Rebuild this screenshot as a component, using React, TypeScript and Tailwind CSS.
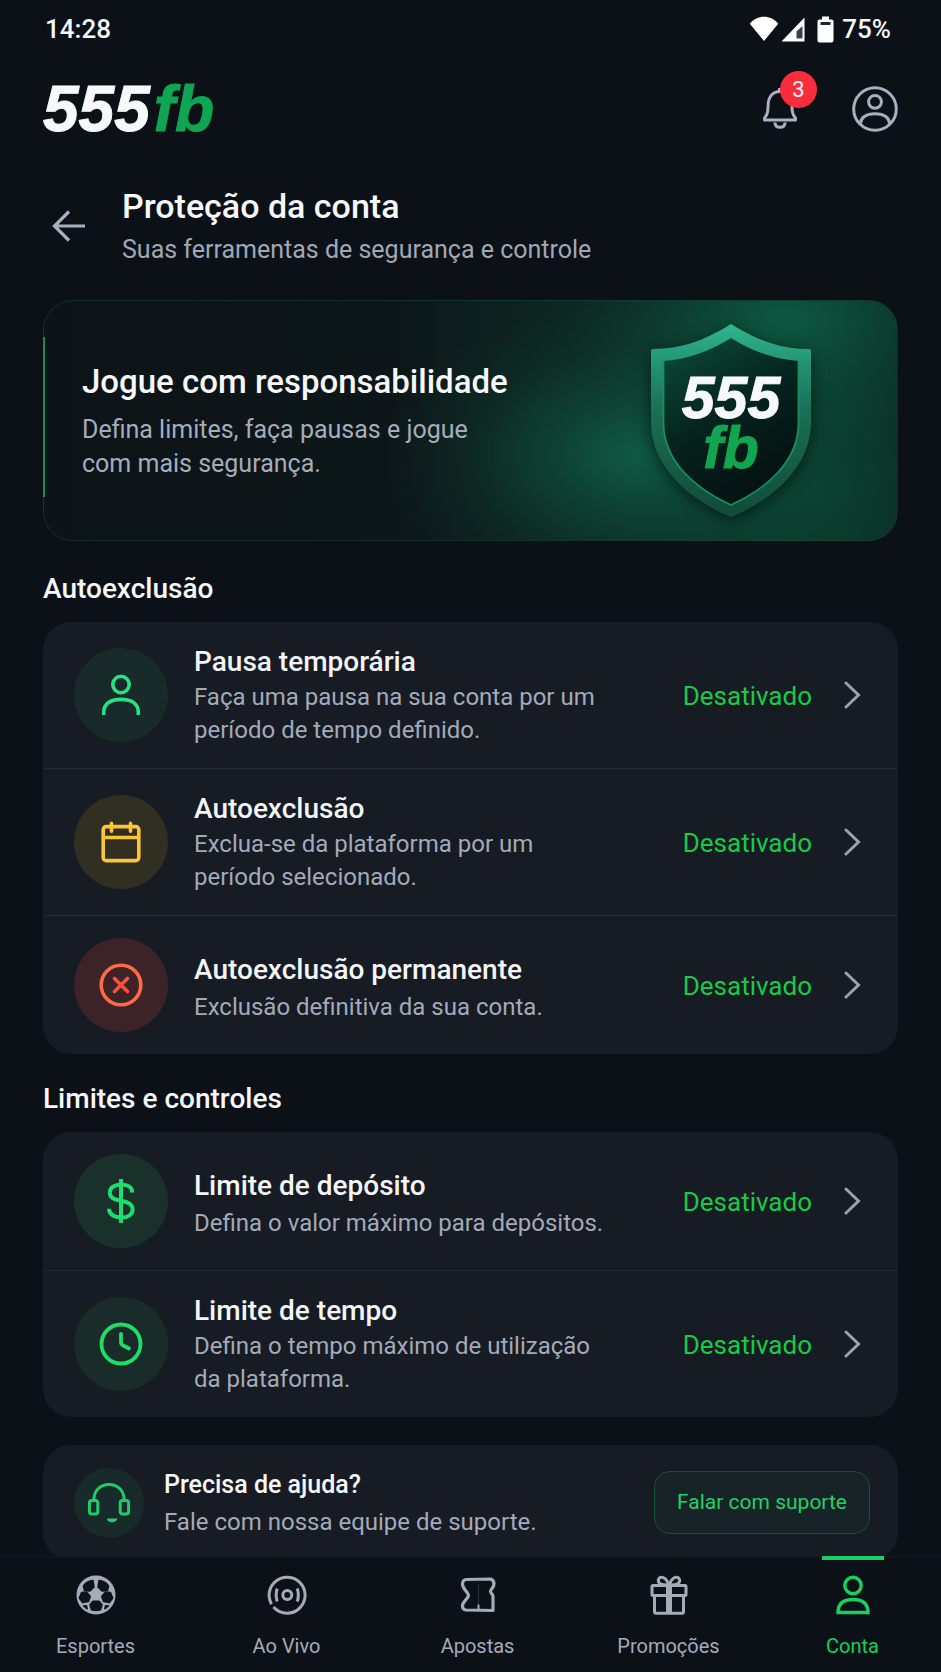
import type { ReactNode } from 'react'
import { clsx } from 'clsx'

interface Setting {
  title: string
  description: string
  status: string
  tint: string
  icon: ReactNode
}

interface NavEntry {
  label: string
  icon: ReactNode
  active?: boolean
}

/* Icons */

function PersonIcon() {
  return (
    <svg width="40" height="42" viewBox="0 0 40 42" fill="none" stroke="#29e084" strokeWidth="3.6">
      <circle cx="20" cy="10.5" r="8.2" />
      <path d="M2.7 41v-2.5C2.7 30 9 25.4 20 25.4S37.3 30 37.3 38.5V41" />
    </svg>
  )
}

function CalendarIcon() {
  return (
    <svg width="40" height="42" viewBox="0 0 40 42" fill="none" stroke="#fcc437" strokeWidth="3.6" strokeLinecap="round" strokeLinejoin="round">
      <rect x="2.2" y="5.6" width="35.6" height="34" rx="3" />
      <path d="M2.5 16.5h35M10.5 2.2v8M29.5 2.2v8" />
    </svg>
  )
}

function BlockIcon() {
  return (
    <svg width="44" height="44" viewBox="0 0 44 44" fill="none" strokeWidth="3.6" strokeLinecap="round">
      <circle cx="22" cy="22" r="19.8" stroke="#ff6a45" />
      <path d="M15.5 15.5l13 13M28.5 15.5l-13 13" stroke="#fb5240" />
    </svg>
  )
}

function DollarIcon() {
  return (
    <svg width="30" height="46" viewBox="0 0 30 46" fill="none" stroke="#1edd70" strokeWidth="4">
      <path d="M15 1v44" />
      <path d="M26.3 14.5C26.3 9.6 22 6.4 15.3 6.4S3.8 9.8 3.8 14.8c0 5.2 4.7 6.7 11.2 8 6.6 1.3 11.6 2.9 11.6 8.5 0 5-4.5 8.3-11.4 8.3S3 36.2 3 30.7" />
    </svg>
  )
}

function ClockIcon() {
  return (
    <svg width="44" height="44" viewBox="0 0 44 44" fill="none" stroke="#20dc68" strokeWidth="3.8" strokeLinecap="round" strokeLinejoin="round">
      <circle cx="22" cy="22" r="19.5" />
      <path d="M22 12v8.5c0 1.5.6 2.2 1.7 2.8l6.3 3.2" />
    </svg>
  )
}

function HeadsetIcon() {
  return (
    <svg width="44" height="42" viewBox="0 0 44 42" fill="none" stroke="#1fcc6c" strokeWidth="3" strokeLinejoin="round">
      <path d="M6.8 18.5C6.8 8.5 13 2.4 22 2.4s15.2 6.1 15.2 16.1" />
      <rect x="2.4" y="18.5" width="8.4" height="13.5" rx="2.5" />
      <rect x="33.2" y="18.5" width="8.4" height="13.5" rx="2.5" />
      <path d="M20 36.5h10.5c-.8 2.7-2.6 3.7-5 3.7-3.3 0-5.2-.7-5.5-3.7z" fill="#1fcc6c" stroke="none" />
    </svg>
  )
}

function BackIcon() {
  return (
    <svg width="34" height="32" viewBox="0 0 34 32" fill="none" stroke="#a9b1bf" strokeWidth="3.2">
      <path d="M33 16H3M17 1.5L2.5 16 17 30.5" />
    </svg>
  )
}

function ChevronIcon() {
  return (
    <svg width="17" height="28" viewBox="0 0 17 28" fill="none" stroke="#9aa2b1" strokeWidth="3" strokeLinecap="round">
      <path d="M2 2l12.5 12L2 26" />
    </svg>
  )
}

function BellIcon() {
  return (
    <svg width="36" height="44" viewBox="0 0 36 44" fill="none" stroke="#aab1be" strokeWidth="3" strokeLinejoin="round">
      <path d="M18 4V1" strokeWidth="4" />
      <path d="M2.5 33v-2c2.5-2.5 3.5-5.5 3.5-11C6 10 10.5 4.5 18 4.5S30 10 30 20c0 5.5 1 8.500 3.500 11v2z" />
      <path d="M13 35.5c0 3 2 4.8 5 4.8s5-1.8 5-4.8" />
    </svg>
  )
}

function AvatarIcon() {
  return (
    <svg width="46" height="46" viewBox="0 0 46 46" fill="none" stroke="#a8afbc" strokeWidth="3">
      <circle cx="23" cy="23" r="21.3" />
      <circle cx="23" cy="15.8" r="6.4" />
      <path d="M8 38.3C9 31 14 27.8 23 27.8S37 31 38 38.3" />
    </svg>
  )
}

function WifiIcon() {
  return (
    <svg width="30" height="26" viewBox="0 0 30 26" fill="#fff">
      <path d="M15 25L.8 7.8C4.5 3 9.5.8 15 .8S25.5 3 29.2 7.8z" />
    </svg>
  )
}

function SignalIcon() {
  return (
    <svg width="24" height="25" viewBox="0 0 24 25">
      <path d="M23.5.5V24.5H.5z" fill="#fff" />
      <path d="M15.5 14.5l6-5.5v12.5h-6z" fill="#3a404b" />
    </svg>
  )
}

function BatteryIcon() {
  return (
    <svg width="17" height="27" viewBox="0 0 17 27">
      <path d="M5 .5h7v3h2.5a2 2 0 0 1 2 2V24.5a2 2 0 0 1-2 2h-12a2 2 0 0 1-2-2V5.5a2 2 0 0 1 2-2H5z" fill="#fff" />
      <path d="M3.5 6h10v3h-10z" fill="#20252e" />
    </svg>
  )
}

function BallIcon() {
  return (
    <svg width="40" height="40" viewBox="0 0 40 40">
      <circle cx="20" cy="20" r="19.5" fill="#a5abb8" />
      <g fill="#0f141c" stroke="#0f141c" strokeWidth="1.5" strokeLinejoin="round">
        <path d="M17 5.500l1 6.500-4 4-5.500-.5L7.500 11Q10.500 6 17 5.500z" />
        <path d="M23 5.500l-1 6.500 4 4 5.500-.5L32.500 11Q29.500 6 23 5.500z" />
        <path d="M5.500 17.500l5-.5 3.800 4.500-1.800 5-6 1L3.300 23z" />
        <path d="M34.500 17.500l-5-.5-3.800 4.500 1.800 5 6 1L36.700 23z" />
        <path d="M17 26.300h6l3 3.500-1.500 5q-4.500 1.500-9 0l-1.500-5z" />
        <path d="M7.500 31l3-.2.7 3z" />
        <path d="M32.500 31l-3-.2-.7 3z" />
      </g>
    </svg>
  )
}

function LiveIcon() {
  return (
    <svg width="40" height="40" viewBox="0 0 40 40" fill="none" stroke="#a5abb8" strokeWidth="3">
      <path d="M4.5 29.2A18 18 0 1 1 34.5 31" />
      <path d="M6.5 32A18 18 0 0 0 34.5 31" />
      <circle cx="20.3" cy="20" r="4.5" />
      <path d="M10.2 13.5c-1.3 4-1.3 9 0 13M30.3 13.5c1.3 4 1.3 9 0 13" />
    </svg>
  )
}

function TicketIcon() {
  return (
    <svg width="36" height="36" viewBox="0 0 36 36" fill="none" stroke="#a5abb8" strokeWidth="3.2" strokeLinejoin="round">
      <path d="M6 2.5L31 2q3 1.5 3 5c0 3.5-3.5 5-3.5 7.5 0 2 2.5 2.5 2.5 5V33.5L5.500 33Q2 32 2.500 28.500C3 24.500 8.500 21 8.500 18.500S3 12 2.500 7.500Q2.500 3 6 2.500z" />
      <path d="M18.5 7v20" strokeWidth="1" stroke="#2c323c" />
      <path d="M18.5 27.5v5" strokeWidth="2" />
    </svg>
  )
}

function GiftIcon() {
  return (
    <svg width="38" height="40" viewBox="0 0 38 40" fill="none" stroke="#a5abb8" strokeWidth="3" strokeLinejoin="round">
      <rect x="2" y="10.5" width="34" height="10" rx="1" />
      <path d="M4.5 20.5v16.3q0 1.5 1.5 1.5h26q1.5 0 1.5-1.5V20.5" />
      <path d="M19 10.5v28" strokeWidth="6" />
      <path d="M18.5 10C11 10.5 7.5 8 8.5 4.5 10 .5 16.5 1.5 18.5 10zM19.5 10C27 10.5 30.5 8 29.5 4.5 28 .5 21.5 1.5 19.5 10z" />
    </svg>
  )
}

function AccountIcon() {
  return (
    <svg width="36" height="40" viewBox="0 0 36 40" fill="none" stroke="#18cf62" strokeWidth="3.4">
      <circle cx="18" cy="10.5" r="8.2" />
      <path d="M3 37.5c0-8.5 5-13 15-13s15 4.500 15 13z" fill="#0c1118" />
    </svg>
  )
}

function Shield() {
  return (
    <div className="relative h-[194px] w-[162px] shrink-0">
      <svg className="overflow-visible drop-shadow-[0_4px_8px_rgba(0,16,10,0.7)]" width="162" height="194" viewBox="0 0 162 194">
        <defs>
          <linearGradient id="rim" x1="0" y1="0" x2="0" y2="1">
            <stop offset="0" stopColor="#2fb78d" />
            <stop offset="0.2" stopColor="#249474" />
            <stop offset="0.45" stopColor="#1a6f55" />
            <stop offset="1" stopColor="#124a39" />
          </linearGradient>
          <linearGradient id="face" x1="0.2" y1="0" x2="0.7" y2="1">
            <stop offset="0" stopColor="#0a4636" />
            <stop offset="0.5" stopColor="#05211b" />
            <stop offset="1" stopColor="#050f13" />
          </linearGradient>
        </defs>
        <path d="M81 0C108 17 132 25 159 25q2 0 2 2V100C160 145 120 177 81 193 42 177 2 145 1 100V27q0-2 2-2C30 25 54 17 81 0z" fill="url(#rim)" />
        <path d="M81 14C105 29 127 35.5 148.5 37V100C148 138 116 165 81 181 46 165 14 138 13.5 100V37C35 35.5 57 29 81 14z" fill="url(#face)" />
        <path d="M13.5 37V100C14 138 46 165 81 181 116 165 148 138 148.5 100V37" fill="none" stroke="#15915c" strokeWidth="1.8" />
      </svg>
      <div className="absolute inset-x-0 top-[49px] text-center font-['Liberation_Sans'] text-[59px] leading-[50px] font-bold italic [-webkit-text-stroke:1px]">
        <div>555</div>
        <div className="text-[#12a551]">fb</div>
      </div>
    </div>
  )
}

/* Page data */

const exclusionSettings: Setting[] = [
  {
    title: 'Pausa temporária',
    description: 'Faça uma pausa na sua conta por um período de tempo definido.',
    status: 'Desativado',
    tint: 'bg-[#182b2a]',
    icon: <PersonIcon />,
  },
  {
    title: 'Autoexclusão',
    description: 'Exclua-se da plataforma por um período selecionado.',
    status: 'Desativado',
    tint: 'bg-[#312e22]',
    icon: <CalendarIcon />,
  },
  {
    title: 'Autoexclusão permanente',
    description: 'Exclusão definitiva da sua conta.',
    status: 'Desativado',
    tint: 'bg-[#3b2328]',
    icon: <BlockIcon />,
  },
]

const limitSettings: Setting[] = [
  {
    title: 'Limite de depósito',
    description: 'Defina o valor máximo para depósitos.',
    status: 'Desativado',
    tint: 'bg-[#1a312b]',
    icon: <DollarIcon />,
  },
  {
    title: 'Limite de tempo',
    description: 'Defina o tempo máximo de utilização da plataforma.',
    status: 'Desativado',
    tint: 'bg-[#1a2c2a]',
    icon: <ClockIcon />,
  },
]

const navEntries: NavEntry[] = [
  { label: 'Esportes', icon: <BallIcon /> },
  { label: 'Ao Vivo', icon: <LiveIcon /> },
  { label: 'Apostas', icon: <TicketIcon /> },
  { label: 'Promoções', icon: <GiftIcon /> },
  { label: 'Conta', icon: <AccountIcon />, active: true },
]

function SettingRow({ setting }: { setting: Setting }) {
  // short descriptions fit on one line and get a looser, slightly lower block
  const short = setting.description.length < 40

  return (
    <li className="border-b border-[#242932] last:border-0">
      <button
        type="button"
        className={clsx('flex w-full items-center pr-[37px] pl-[31px] text-left', short ? 'min-h-[138px]' : 'min-h-[146px]')}
      >
        <span className={clsx('flex size-[94px] shrink-0 items-center justify-center rounded-full', setting.tint)}>
          {setting.icon}
        </span>
        <span className={clsx('ml-[26px] flex-1', short && 'pt-1')}>
          <span className={clsx('block text-[28px] leading-[38px] font-medium text-[#f4f5f7]', short && 'mb-0.5')}>
            {setting.title}
          </span>
          <span className="block max-w-[424px] text-[24px] leading-[33px] text-[#a3aab9]">{setting.description}</span>
        </span>
        <span className="mr-8 pt-0.5 text-[26px] text-[#17cb46]">{setting.status}</span>
        <ChevronIcon />
      </button>
    </li>
  )
}

function SettingsSection({ title, settings }: { title: string; settings: Setting[] }) {
  return (
    <section>
      <h2 className="pt-[13px] pb-[15px] text-[28px] leading-[36px] font-medium">{title}</h2>
      <ul className="overflow-hidden rounded-[28px] bg-[#171b24]">
        {settings.map(s => (
          <SettingRow key={s.title} setting={s} />
        ))}
      </ul>
    </section>
  )
}

export default function App() {
  return (
    <div className="min-h-screen bg-[#0c1118] font-['Roboto',sans-serif] text-[#f7f8fa]">
      {/* Status bar */}
      <div className="flex h-14 items-center justify-between pt-0.5 pr-[50px] pl-[45px] text-[26px] font-medium">
        <span>14:28</span>
        <div className="flex items-center">
          <WifiIcon />
          <span className="ml-0.5"><SignalIcon /></span>
          <span className="mr-2 ml-3"><BatteryIcon /></span>
          <span>75%</span>
        </div>
      </div>

      {/* Brand header */}
      <header className="flex h-[105px] items-center justify-between px-[43px]">
        <a href="#inicio" className="font-['Liberation_Sans'] text-[64px] leading-none font-bold italic [-webkit-text-stroke:1px]">
          555<span className="ml-1 text-[#10a552]">fb</span>
        </a>
        <div className="flex items-center gap-[54px]">
          <button type="button" aria-label="Notificações" className="relative">
            <BellIcon />
            <span className="absolute -top-4 left-[18px] flex size-[37px] items-center justify-center rounded-full bg-[#fb2c3b] text-[22px]">
              3
            </span>
          </button>
          <button type="button" aria-label="Perfil">
            <AvatarIcon />
          </button>
        </div>
      </header>

      <main className="px-[43px] pb-28">
        {/* Page title */}
        <div className="flex h-[139px] items-center pb-1.5">
          <button type="button" aria-label="Voltar" className="ml-[9px] pb-1">
            <BackIcon />
          </button>
          <div className="ml-9">
            <h1 className="text-[34px] leading-[44px] font-medium">Proteção da conta</h1>
            <p className="text-[25px] leading-[44px] text-[#a0a7b6]">Suas ferramentas de segurança e controle</p>
          </div>
        </div>

        {/* Responsible gaming banner */}
        <section className="relative flex h-[241px] items-center justify-between rounded-[30px] border border-[#12402f]/60 bg-[radial-gradient(ellipse_260px_150px_at_70%_64%,#10674acc,#10674a66_35%,#10674a1a_70%,#10674a00),radial-gradient(ellipse_220px_140px_at_87%_8%,#0e6045cc,#0e604533_60%,#0e604500),radial-gradient(ellipse_150px_160px_at_91%_80%,#0a463299,#0a463200),linear-gradient(90deg,#0d1418_0%,#0d1619_40%,#0d2622_60%,#0b3529_85%,#0b2c24_100%)] pr-[85px] pl-[38px]">
          <span className="absolute top-[36px] -left-px h-[160px] w-[2px] bg-[#1b8a62]" />
          <div>
            <h2 className="mb-2.5 text-[33px] leading-[42px] font-medium">Jogue com responsabilidade</h2>
            <p className="max-w-[400px] text-[25px] leading-[34px] text-[#a6adba]">
              Defina limites, faça pausas e jogue com mais segurança.
            </p>
          </div>
          <Shield />
        </section>

        <div className="pt-[17px]">
          <SettingsSection title="Autoexclusão" settings={exclusionSettings} />
        </div>
        <div className="pt-[14px]">
          <SettingsSection title="Limites e controles" settings={limitSettings} />
        </div>

        {/* Support card */}
        <section className="mt-7 flex h-[115px] items-center rounded-[28px] bg-[#171b24] pr-[28px] pl-[31px]">
          <span className="flex size-[70px] shrink-0 items-center justify-center rounded-full bg-[#182a2a]">
            <HeadsetIcon />
          </span>
          <div className="ml-5 flex-1">
            <h2 className="text-[25px] leading-[38px] font-medium">Precisa de ajuda?</h2>
            <p className="text-[24px] leading-[36px] text-[#a3aab9]">Fale com nossa equipe de suporte.</p>
          </div>
          <button type="button" className="h-[63px] rounded-2xl border border-[#155237] bg-[#172326] px-[22px] text-[21px] text-[#1fd267]">
            Falar com suporte
          </button>
        </section>
      </main>

      {/* Bottom navigation */}
      <nav className="fixed inset-x-0 bottom-0 grid h-[116px] grid-cols-[191fr_191fr_191fr_191fr_177fr] border-t border-[#151a22] bg-[#0c1118]">
        {navEntries.map(n => (
          <a
            key={n.label}
            href="#"
            className={clsx('relative flex flex-col items-center pt-[18px] text-[20px]', n.active ? 'text-[#17cf5c]' : 'text-[#a5abb8]')}
          >
            {n.active && <span className="absolute -top-px h-1 w-[62px] bg-[#18cf62]" />}
            <span className="flex h-10 items-center">{n.icon}</span>
            <span className="mt-[15px] leading-[32px]">{n.label}</span>
          </a>
        ))}
      </nav>
    </div>
  )
}
